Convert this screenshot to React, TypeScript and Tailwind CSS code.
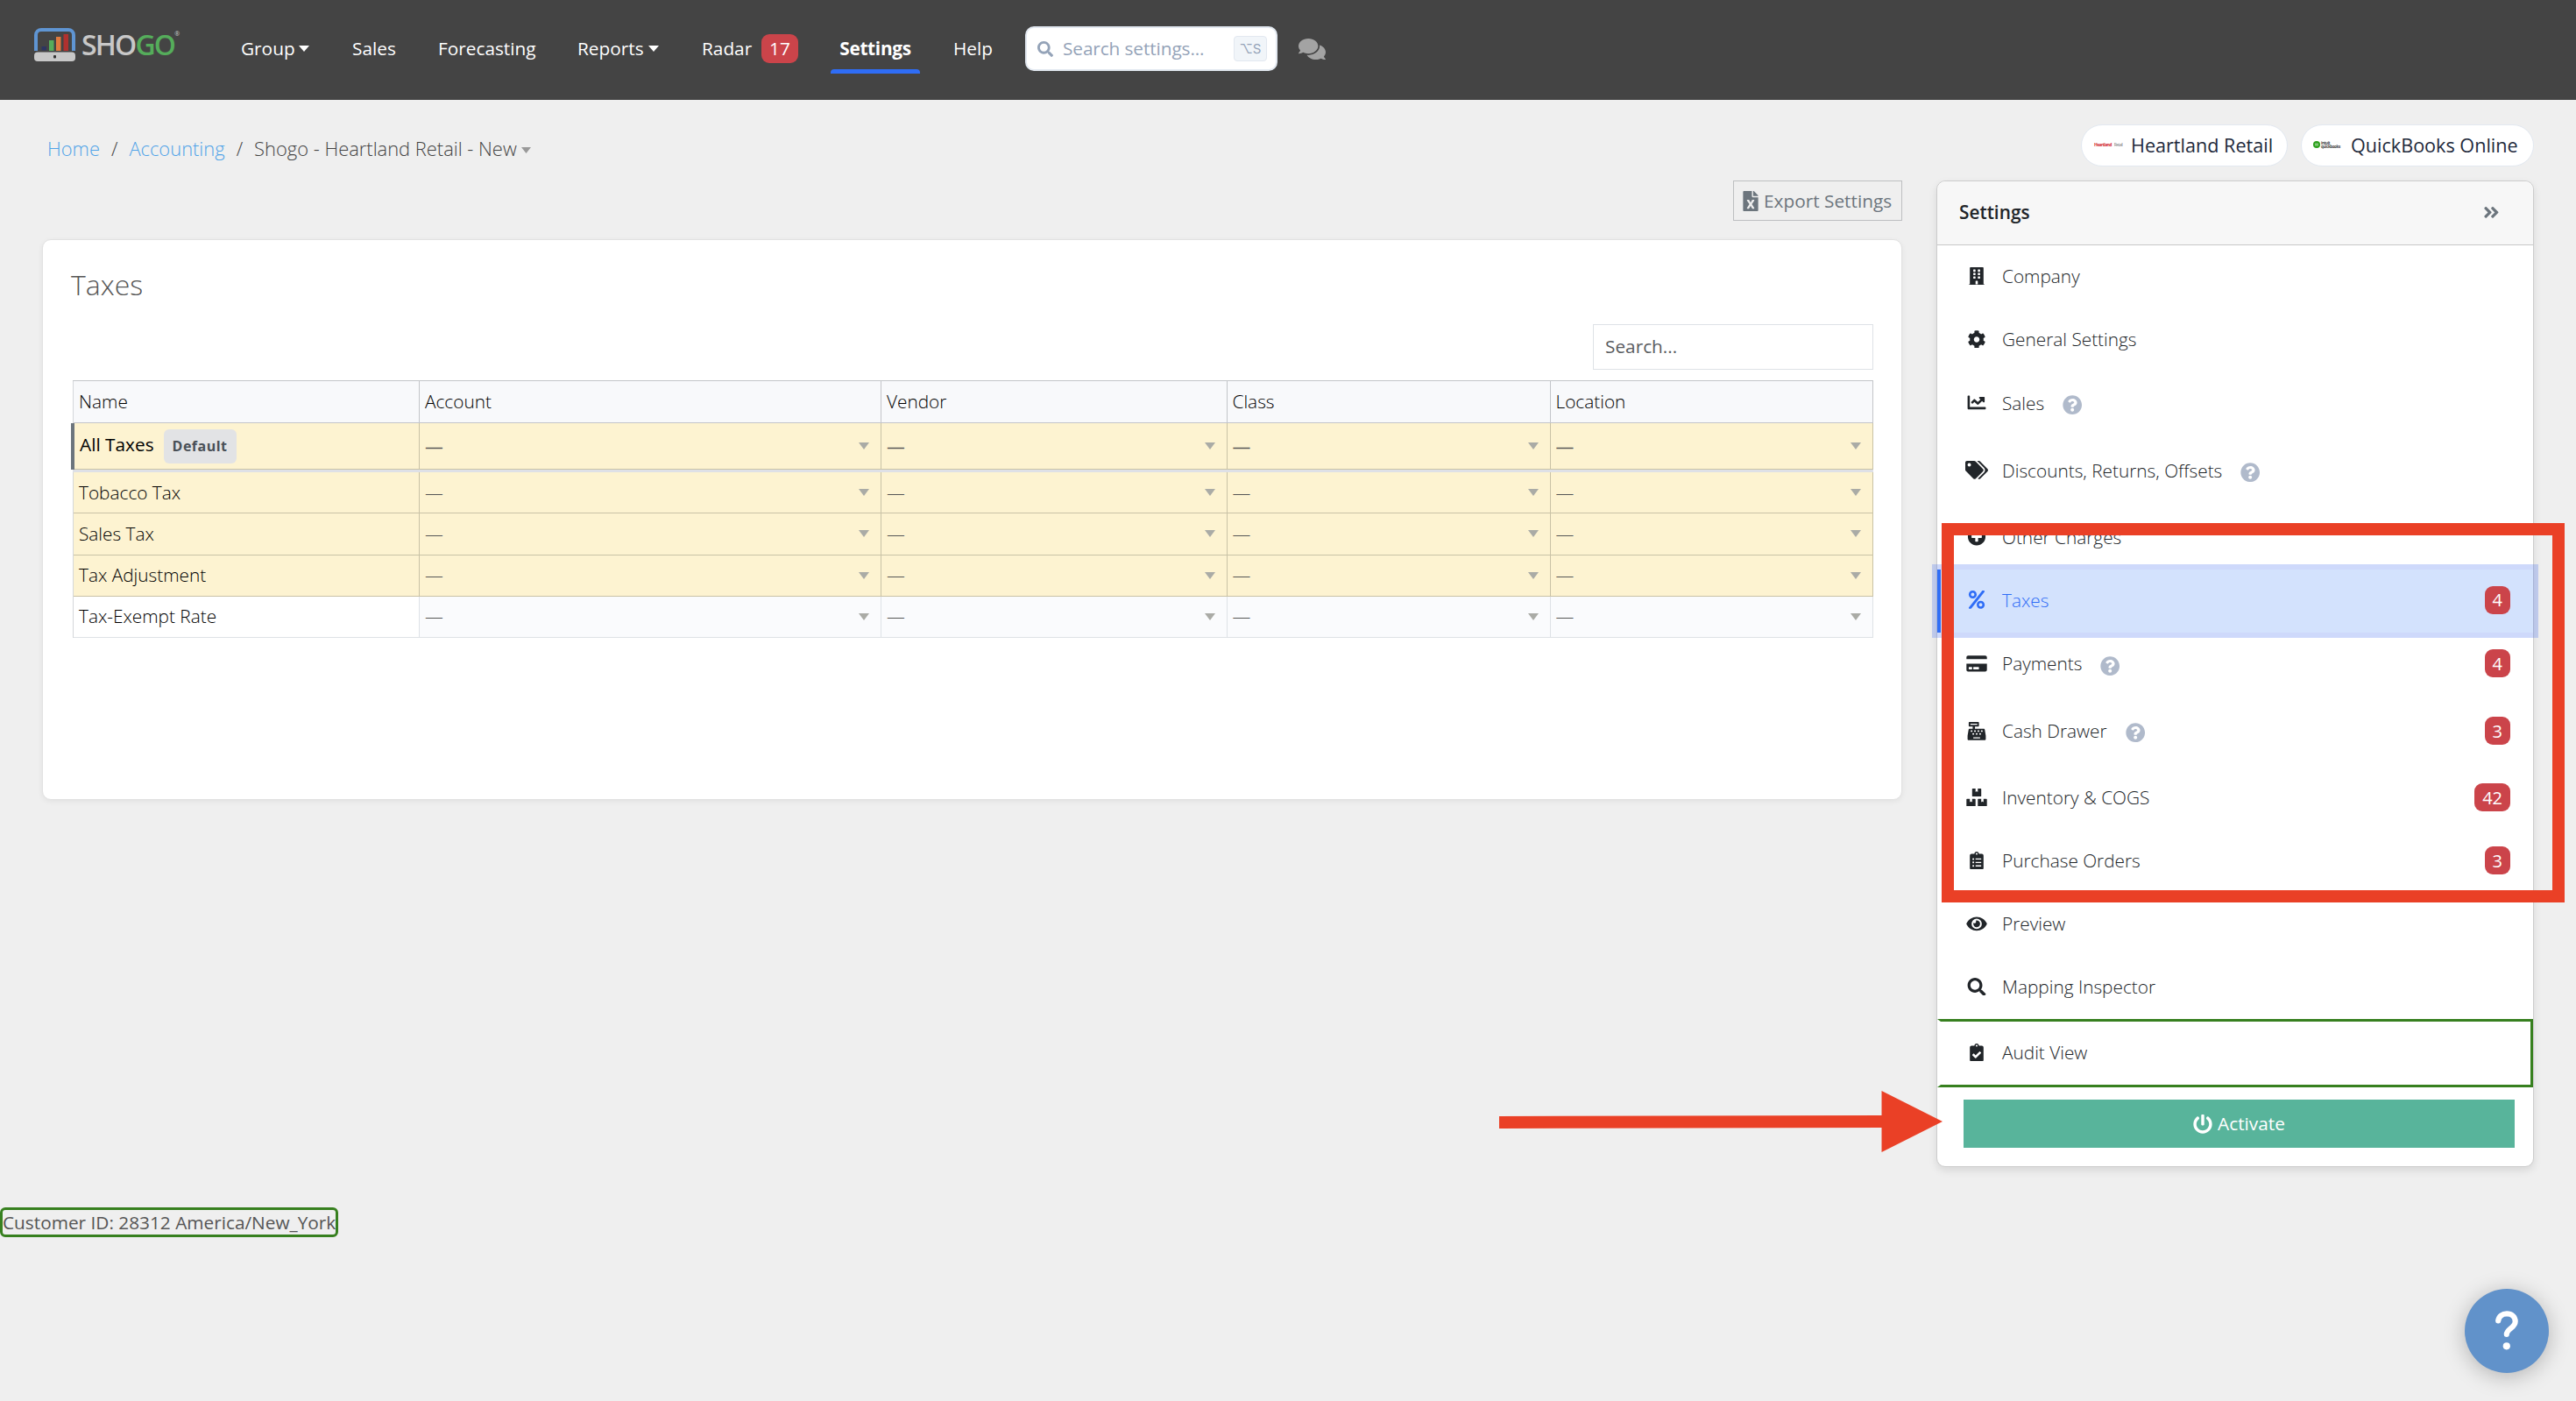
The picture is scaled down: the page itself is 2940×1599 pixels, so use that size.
import React from 'react';
import type { IconType } from 'react-icons';
import {
  FaAngleDoubleRight,
  FaBoxes,
  FaBuilding,
  FaCashRegister,
  FaChartLine,
  FaClipboardCheck,
  FaClipboardList,
  FaCog,
  FaComments,
  FaCreditCard,
  FaEye,
  FaFileExcel,
  FaPercent,
  FaPlusCircle,
  FaPowerOff,
  FaQuestionCircle,
  FaSearch,
  FaTags,
} from 'react-icons/fa';

type MenuItem = {
  label: string;
  icon: IconType;
  help?: boolean;
  count?: number;
  active?: boolean;
};

const menuItems: MenuItem[] = [
  { label: 'Company', icon: FaBuilding },
  { label: 'General Settings', icon: FaCog },
  { label: 'Sales', icon: FaChartLine, help: true },
  { label: 'Discounts, Returns, Offsets', icon: FaTags, help: true },
  { label: 'Other Charges', icon: FaPlusCircle },
  { label: 'Taxes', icon: FaPercent, count: 4, active: true },
  { label: 'Payments', icon: FaCreditCard, help: true, count: 4 },
  { label: 'Cash Drawer', icon: FaCashRegister, help: true, count: 3 },
  { label: 'Inventory & COGS', icon: FaBoxes, count: 42 },
  { label: 'Purchase Orders', icon: FaClipboardList, count: 3 },
  { label: 'Preview', icon: FaEye },
  { label: 'Mapping Inspector', icon: FaSearch },
];

const columns = ['Name', 'Account', 'Vendor', 'Class', 'Location'];

const taxRows = [
  { name: 'Tobacco Tax', unmapped: true },
  { name: 'Sales Tax', unmapped: true },
  { name: 'Tax Adjustment', unmapped: true },
  { name: 'Tax-Exempt Rate', unmapped: false },
];

const tableGrid = 'grid grid-cols-[395px_527px_394.500px_369px_368.500px]';

const Caret: React.FC<{ className?: string }> = ({ className }) => (
  <svg viewBox="0 0 12 7" preserveAspectRatio="none" className={className} fill="currentColor">
    <path d="M0 0h12L6 7z" />
  </svg>
);

const Logo: React.FC = () => (
  <div className="flex h-[38px] w-[167px] items-center">
    <svg viewBox="0 0 47 38" className="h-[38px] w-[47px] shrink-0">
      <path d="M2 26V8a6 6 0 0 1 6-6h31a6 6 0 0 1 6 6v18" fill="none" stroke="#5f95d3" strokeWidth="4" />
      <rect x="8.500" y="21" width="5.500" height="4.500" fill="#2d3561" />
      <rect x="17" y="14" width="5.5" height="12" fill="#55ad5b" />
      <rect x="25" y="10" width="5.5" height="16" fill="#e07a3f" />
      <rect x="33.500" y="7" width="5.500" height="19" fill="#b0312f" />
      <rect x="0" y="27.500" width="47" height="10.500" rx="4" fill="#c8c8c8" />
      <rect x="22" y="31" width="3" height="3.500" rx="1" fill="#333" />
    </svg>
    <span className="ml-[7px] text-[32px] leading-none font-semibold tracking-[-1.8px] text-[#c8c8c8]">
      SHO<span className="text-[#55ad5b]">GO</span>
    </span>
    <span className="mb-[26px] text-[7px] leading-none text-[#c8c8c8]">®</span>
  </div>
);

const Navbar: React.FC = () => (
  <header className="flex h-[114px] items-start bg-[#444] pl-[39px] font-medium text-white">
    <div className="mt-[32px]">
      <Logo />
    </div>
    <nav className="mt-[30px] ml-[69px] flex h-[51px] items-center">
      <a className="flex w-[127px] items-center gap-[4px]">
        Group <Caret className="h-[7px] w-[12px]" />
      </a>
      <a className="w-[98px]">Sales</a>
      <a className="w-[159px]">Forecasting</a>
      <a className="flex w-[142px] items-center gap-[5px]">
        Reports <Caret className="h-[7px] w-[12px]" />
      </a>
      <a className="flex w-[147px] items-center">
        <span className="w-[68px]">Radar</span>
        <span className="flex h-[33px] w-[42px] items-center justify-center rounded-[9px] bg-[#cb444a]">17</span>
      </a>
      <a className="relative flex h-full w-[102px] items-center justify-center font-bold tracking-[-0.3px]">
        Settings
        <span className="absolute -bottom-[3px] left-0 h-[5px] w-full rounded-t-[4px] bg-[#2f6df6]" />
      </a>
      <a className="ml-[38px] w-[82px]">Help</a>
      <div className="flex h-[51px] w-[288px] items-center rounded-[10px] border-2 border-[#e2e8f0] bg-white pl-[12px] pr-[10px] font-normal text-[#94a3b8]">
        <FaSearch className="size-[18px]" />
        <span className="ml-[11px] flex-1 tracking-[-0.1px]">Search settings...</span>
        <kbd className="flex h-[29px] w-[38px] items-center justify-center rounded-[4px] border border-[#e2e8f0] bg-[#f1f5f9] font-[Inter,'DejaVu_Sans',sans-serif] text-[15px] leading-none">
          ⌥S
        </kbd>
      </div>
      <FaComments className="ml-[24px] h-[28px] w-[31px] text-[#a3a3a3]" />
    </nav>
  </header>
);

const Breadcrumb: React.FC = () => (
  <div className="mt-[12px] flex items-center pl-[6px] text-[21.900px] font-light text-[#444]">
    <a className="text-[#4fa3e8]">Home</a>
    <span className="mx-[13px]">/</span>
    <a className="text-[#4fa3e8]">Accounting</a>
    <span className="mx-[13px]">/</span>
    <span>Shogo - Heartland Retail - New</span>
    <Caret className="mt-[4px] ml-[5px] h-[7px] w-[11px] text-[#999]" />
  </div>
);

const Connections: React.FC = () => (
  <div className="flex gap-[15px] text-[21.600px] text-[#1e293b]">
    <div className="flex h-[48px] w-[236px] items-center rounded-full border border-[#e2e8f0] bg-white pb-[2px] pl-[14px] whitespace-nowrap">
      <span className="flex w-[42px] shrink-0 gap-[3px] text-[5px] leading-none tracking-[-0.6px]">
        <b className="text-[#d22630]">Heartland</b>
        <span className="text-[#777]">Retail</span>
      </span>
      Heartland Retail
    </div>
    <div className="flex h-[48px] w-[266px] items-center rounded-full border border-[#e2e8f0] bg-white pb-[2px] pl-[13px] whitespace-nowrap">
      <span className="flex w-[43px] shrink-0 items-center gap-px">
        <svg viewBox="0 0 8 8" className="size-[8px]">
          <circle cx="4" cy="4" r="4" fill="#2ca01c" />
          <path d="M3 2.500v3M5 2.500v3" stroke="#fff" strokeWidth="0.800" />
        </svg>
        <span className="flex flex-col text-[4.500px] leading-[4.500px] font-bold tracking-[-0.4px] text-[#444]">
          <span>intuit</span>
          <span>quickbooks</span>
        </span>
      </span>
      QuickBooks Online
    </div>
  </div>
);

const MappingCells: React.FC<{ className: string; dash?: string }> = ({ className, dash = '' }) => (
  <>
    {columns.slice(1).map((column) => (
      <div key={column} className={`flex items-center justify-between border-r pr-[13px] pl-[6px] ${className}`}>
        <span className={`text-[#555] ${dash}`}>—</span>
        <Caret className="h-[8px] w-[12px] text-[#aaaba6]" />
      </div>
    ))}
  </>
);

const TaxTable: React.FC = () => (
  <div className="mt-[12px] ml-[34px] w-[2055px] border-t border-[#c3c5c9] font-light text-black">
    <div className={`${tableGrid} h-[48px] border-l border-[#d5d7da]`}>
      {columns.map((column) => (
        <div key={column} className="flex items-center border-r border-b border-[#c3c5c9] bg-[#f8f9fb] pl-[6px]">
          {column}
        </div>
      ))}
    </div>

    <div className={`${tableGrid} relative h-[53px] border-l border-[#d5d7da]`}>
      <span className="absolute top-0 -left-[3px] h-full w-[4px] bg-[#6c757d]" />
      <div className="flex items-center border-r border-b border-[#c9c2a6] bg-[#fdf3d1] pl-[7px]">
        <span className="pb-[3px] font-medium">All Taxes</span>
        <span className="ml-[11px] flex h-[39px] w-[83px] items-center justify-center rounded-[6px] bg-[#e2e3e5] text-[16px] font-bold tracking-[0.5px] text-[#495057]">
          Default
        </span>
      </div>
      <MappingCells className="border-b border-[#c9c2a6] bg-[#fdf3d1]" dash="font-medium" />
    </div>
    <div className="h-[3px] bg-[#dee0e6]" />

    {taxRows.map((row) => (
      <div key={row.name} className={`${tableGrid} h-[47.250px] border-l border-[#d5d7da]`}>
        <div
          className={`flex items-center border-r border-b pl-[6px] ${
            row.unmapped ? 'border-[#c9c2a6] bg-[#fdf3d1]' : 'border-[#dee2e6] bg-white'
          }`}
        >
          {row.name}
        </div>
        <MappingCells
          className={row.unmapped ? 'border-b border-[#c9c2a6] bg-[#fdf3d1]' : 'border-b border-[#dee2e6] bg-[#fafbfd]'}
        />
      </div>
    ))}
  </div>
);

const SettingsRow: React.FC<{ item: MenuItem }> = ({ item }) => {
  const Icon = item.icon;
  return (
    <li
      className={`relative flex items-center pr-[26px] ${item.help ? 'h-[76.750px] pb-[5px]' : 'h-[72px] pb-[2px]'} ${
        item.active
          ? 'border-l-4 border-[#2f6df6] bg-[#d3e2fd] pl-[28px] text-[#2f6df6] shadow-[0_0_0_6px_rgba(67,107,240,0.26)]'
          : 'pl-[32px]'
      }`}
    >
      <Icon className="h-[20.800px] w-[26px]" />
      <span className="mt-[1px] ml-[16px]">{item.label}</span>
      {item.help && <FaQuestionCircle className="mt-[5px] ml-[21px] size-[22.400px] text-[#b0bacb]" />}
      {item.count && (
        <span className="ml-auto flex h-[32px] items-center rounded-[9px] bg-[#cb444a] px-[9px] text-[20px] font-medium text-white">
          {item.count}
        </span>
      )}
    </li>
  );
};

const SettingsPanel: React.FC = () => (
  <aside className="h-[1126px] w-[682px] rounded-[10px] border border-[#ccc] bg-white shadow-[0_4px_10px_rgba(0,0,0,0.1)]">
    <div className="flex h-[73px] items-center justify-between rounded-t-[10px] border-b border-[#c8c8c8] bg-[#f7f7f7] pr-[37px] pb-[2px] pl-[25px]">
      <span className="font-semibold text-[#212529]">Settings</span>
      <FaAngleDoubleRight className="size-[20.800px] text-[#6c757d]" />
    </div>
    <ul className="font-light text-[#212529]">
      {menuItems.map((item) => (
        <SettingsRow key={item.label} item={item} />
      ))}
      <li className="flex h-[78px] items-center border-y-[3px] border-r-[3px] border-l-4 border-[#37801f] border-l-transparent pb-[2px] pl-[28px]">
        <FaClipboardCheck className="h-[20.800px] w-[26px]" />
        <span className="mt-[1px] ml-[16px]">Audit View</span>
      </li>
    </ul>
    <button className="mt-[14px] ml-[30px] flex h-[55px] w-[629px] items-center justify-center gap-[6px] bg-[#58b49b] font-medium text-white">
      <FaPowerOff className="size-[22px]" />
      Activate
    </button>
  </aside>
);

const App: React.FC = () => (
  <div className="relative min-h-[1599px] w-[2940px] bg-[#efefef] font-['Open_Sans',sans-serif] text-[20.800px] leading-[31px]">
    <Navbar />

    <div className="flex h-[92px] items-start justify-between pt-[28px] pr-[48px] pl-[48px]">
      <Breadcrumb />
      <Connections />
    </div>

    <main className="flex items-start gap-[39px] pl-[48px]">
      <div className="w-[2123px]">
        <div className="flex justify-end">
          <button className="flex h-[46px] w-[193px] items-center gap-[6px] border border-[#bdbfc1] pl-[10px] text-[#6c757d]">
            <FaFileExcel className="h-[23px] w-[18px]" />
            Export Settings
          </button>
        </div>
        <section className="mt-[21px] h-[640px] rounded-[10px] border border-[#e2e2e2] bg-white shadow-[0_2px_6px_rgba(0,0,0,0.06)]">
          <h1 className="pt-[29px] pl-[32px] text-[32px] leading-[44px] font-light text-[#555]">Taxes</h1>
          <div className="mt-[23px] flex justify-end pr-[32px]">
            <div className="flex h-[52px] w-[320px] items-center border border-[#dee2e6] pb-[2px] pl-[13px] text-[#595c5f]">
              Search...
            </div>
          </div>
          <TaxTable />
        </section>
      </div>
      <SettingsPanel />
    </main>

    <footer className="mt-[46px] flex">
      <span className="flex h-[34px] w-[386px] items-center rounded-[6px] border-[3px] border-[#37801f] whitespace-nowrap text-[#555]">
        Customer ID: 28312 America/New_York
      </span>
    </footer>

    {/* callouts drawn over the page */}
    <div className="absolute top-[597px] left-[2216px] h-[433px] w-[711px] border-[14px] border-[#ea4026]" />
    <svg viewBox="0 0 506 70" className="absolute top-[1245px] left-[1711px] h-[70px] w-[506px]" fill="#ea4026">
      <path d="M0 29L436.500 28V0L506 35L436.500 70V42L0 43z" />
    </svg>

    <button className="absolute top-[1471px] left-[2813px] flex size-[96px] items-center justify-center rounded-full bg-[#6192ca] shadow-[0_4px_24px_rgba(0,0,0,0.25)]">
      <svg viewBox="0 0 96 96" className="size-[96px]" fill="none">
        <path
          d="M38.200 36.500C39 31 43 28.300 48 28.300c5.500 0 9.700 3.600 9.700 9 0 7.200-9.900 8.400-9.900 14.700"
          stroke="#fff"
          strokeWidth="6.200"
          strokeLinecap="round"
        />
        <circle cx="47.800" cy="65.300" r="4.100" fill="#fff" />
      </svg>
    </button>
  </div>
);

export default App;
